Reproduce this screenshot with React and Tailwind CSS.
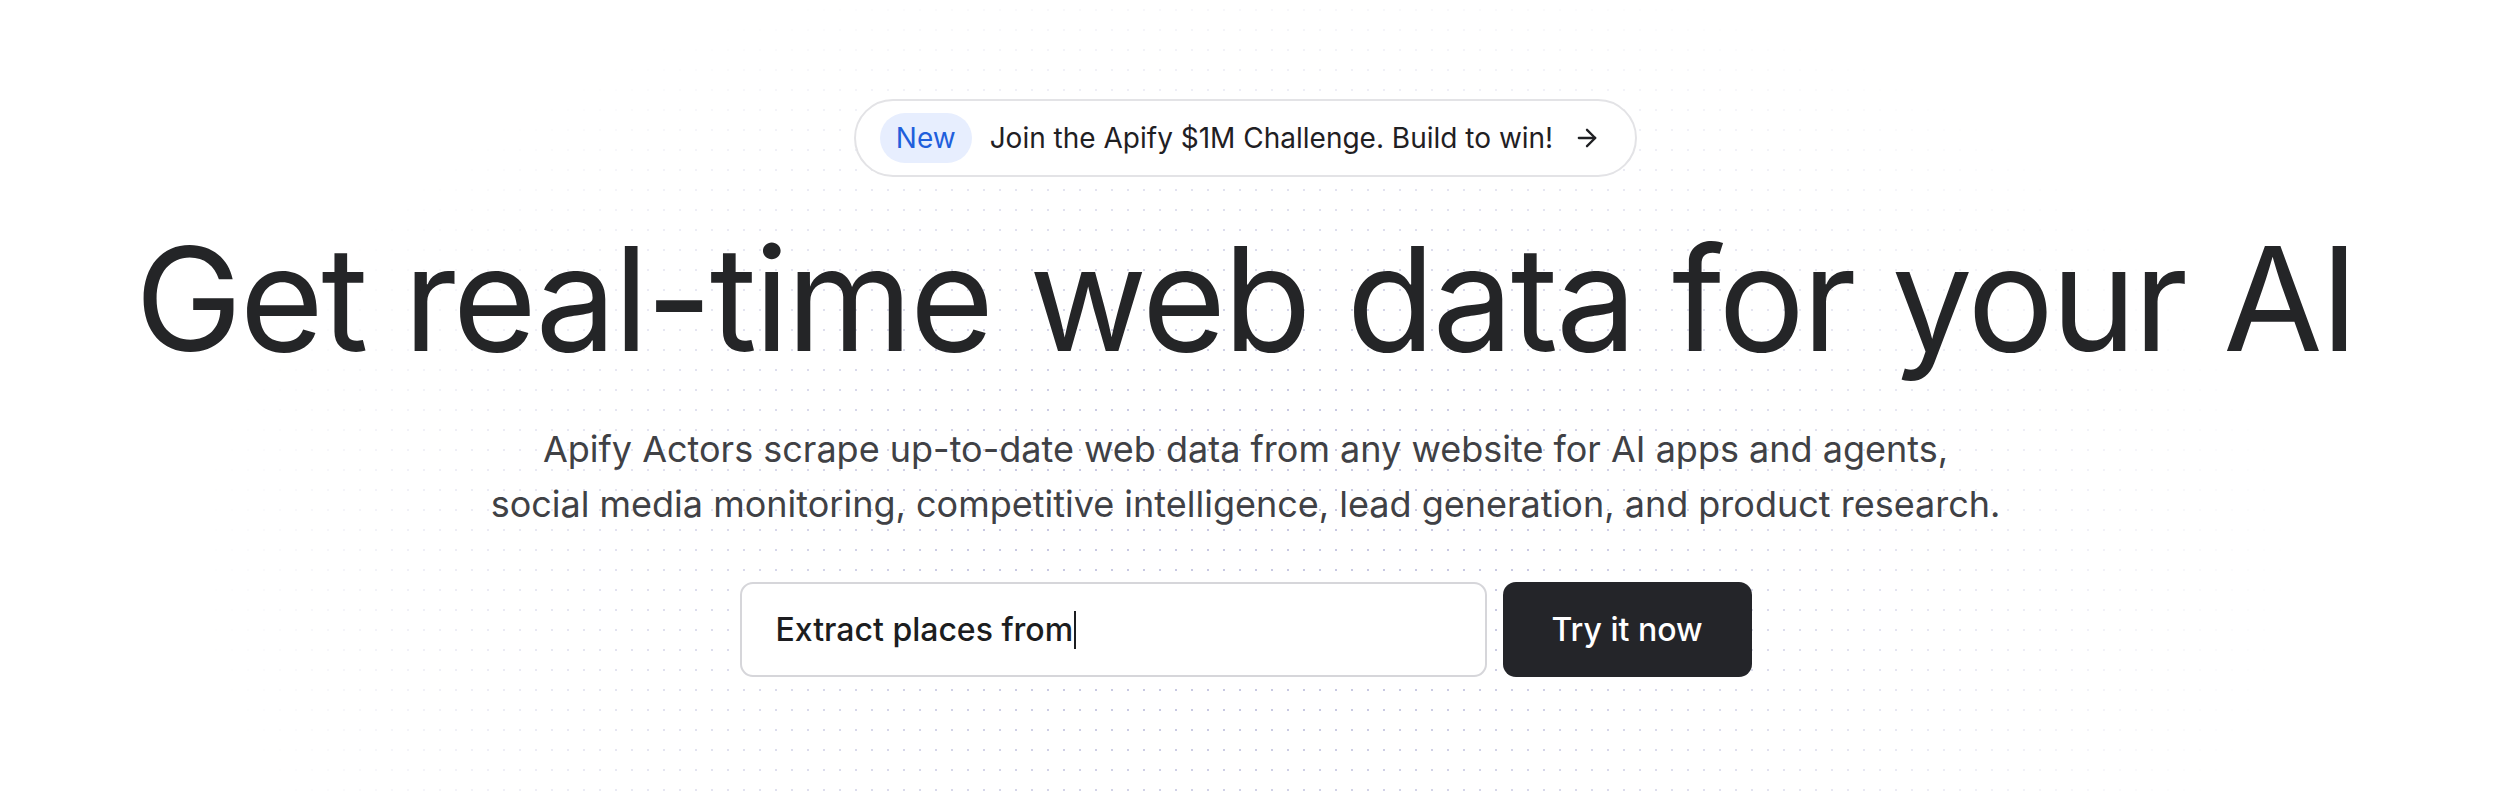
import React from 'react';
import { ArrowRight } from 'lucide-react';

export default function App() {
  return (
    <div className="relative min-h-[804px] overflow-hidden bg-white font-['Inter',sans-serif]">
      {/* dotted backdrop */}
      <div className="pointer-events-none absolute inset-0 bg-[radial-gradient(circle,#c8c9e2_1.1px,transparent_1.5px)] bg-[size:16px_20px] [mask-image:radial-gradient(ellipse_1050px_620px_at_1245px_560px,#000_25%,transparent_100%)]" />

      <main className="relative flex flex-col items-center pt-[99px] pr-[25px]">
        {/* announcement pill */}
        <a className="flex h-[78px] items-center rounded-full border-2 border-[#e3e3e6] bg-white pl-[24px] pr-[34px]">
          <span className="flex h-[50px] items-center rounded-full bg-[#e7eefe] px-[16px] text-[28px] text-[#1f5fdc]">New</span>
          <span className="ml-[18px] text-[28px] text-[#1f2023]">Join the Apify $1M Challenge. Build to win!</span>
          <ArrowRight className="ml-[20px] h-[28px] w-[28px] text-[#1f2023]" strokeWidth={2} />
        </a>

        {/* headline */}
        <h1 className="mt-[50px] text-[144px] leading-none font-normal tracking-[-0.018em] text-[#242527]">
          Get real-time web data for your AI
        </h1>

        <p className="mt-[51px] text-center text-[36px] leading-[55px] text-[#404145]">
          Apify Actors scrape up-to-date web data from any website for AI apps and agents,
          <br />
          social media monitoring, competitive intelligence, lead generation, and product research.
        </p>

        {/* prompt */}
        <div className="mt-[50px] flex gap-[16px]">
          <div className="flex h-[95px] w-[747px] items-center rounded-[13px] border-2 border-[#d6d6da] bg-white px-[34px]">
            <span className="text-[32px] font-medium text-[#1c1d20]">Extract places from</span>
            <span className="ml-[1px] h-[38px] w-[2px] bg-[#1c1d20]" />
          </div>
          <button className="h-[95px] w-[249px] rounded-[13px] bg-[#242529] text-[32px] font-medium text-white">
            Try it now
          </button>
        </div>
      </main>
    </div>
  );
}
